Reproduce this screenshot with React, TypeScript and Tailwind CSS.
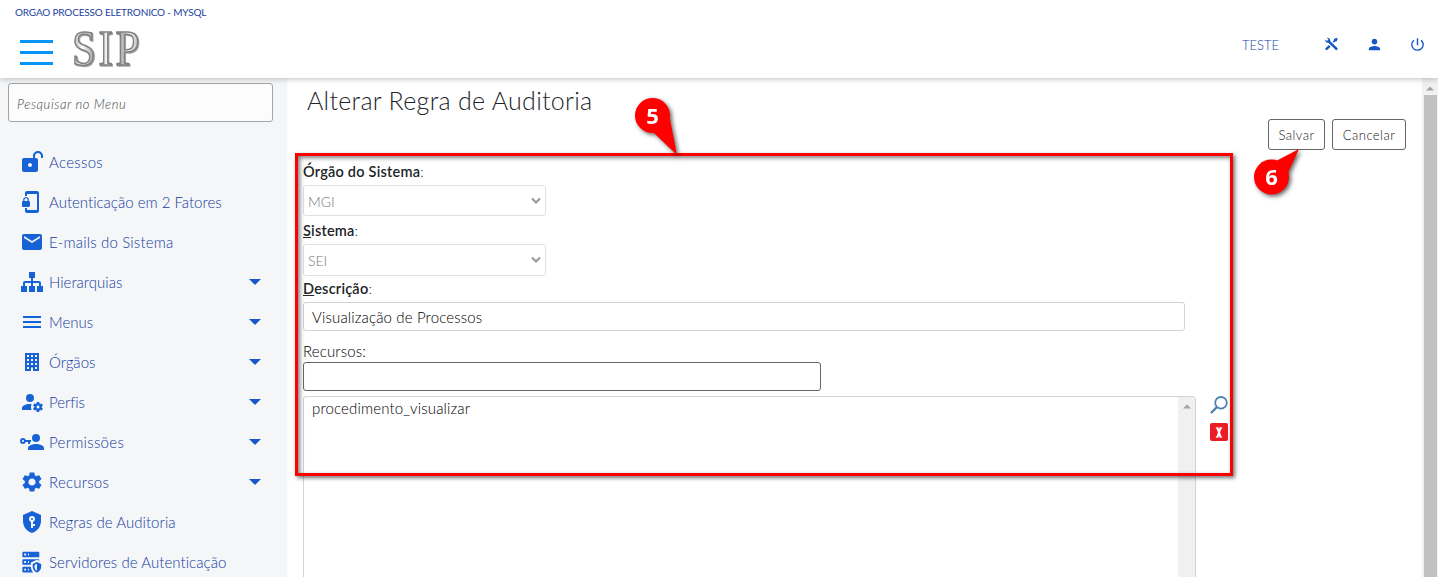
import React from "react";
import { MdEmail, MdMenu, MdSettings, MdPerson, MdPowerSettingsNew } from "react-icons/md";

const paths = {
  lock: "M18 1C15.24 1 13 3.24 13 6V8H4C2.9 8 2 8.89 2 10V20C2 21.11 2.9 22 4 22H16C17.11 22 18 21.11 18 20V10C18 8.9 17.11 8 16 8H15V6C15 4.34 16.34 3 18 3C19.66 3 21 4.34 21 6V8H23V6C23 3.24 20.76 1 18 1M10 13C11.1 13 12 13.89 12 15C12 16.11 11.11 17 10 17C8.9 17 8 16.11 8 15C8 13.9 8.9 13 10 13Z",
  phone: "M17 1H7c-1.1 0-2 .9-2 2v3h2V4h10v16H7v-2H5v3c0 1.1.9 2 2 2h10c1.1 0 2-.9 2-2V3c0-1.1-.9-2-2-2zm-8.2 10V9.5C8.8 8.1 7.4 7 6 7S3.2 8.1 3.2 9.5V11c-.6 0-1.2.6-1.2 1.2v3.5c0 .7.6 1.3 1.2 1.3h5.5c.7 0 1.3-.6 1.3-1.2v-3.5c0-.7-.6-1.3-1.2-1.3zm-1.3 0h-3V9.5c0-.8.7-1.3 1.5-1.3s1.5.5 1.5 1.3V11z",
  sitemap: "M9 2V8H11V11H5C3.89 11 3 11.89 3 13V16H1V22H7V16H5V13H11V16H9V22H15V16H13V13H19V16H17V22H23V16H21V13C21 11.89 20.11 11 19 11H13V8H15V2H9Z",
  building: "M5 3V21H11V17.5H13V21H19V3H5M7 5H9V7H7V5M11 5H13V7H11V5M15 5H17V7H15V5M7 9H9V11H7V9M11 9H13V11H11V9M15 9H17V11H15V9M7 13H9V15H7V13M11 13H13V15H11V13M15 13H17V15H15V13M7 17H9V19H7V17M15 17H17V19H15V17Z",
  profile: "M10 4A4 4 0 0 0 6 8A4 4 0 0 0 10 12A4 4 0 0 0 14 8A4 4 0 0 0 10 4M17 12C16.87 12 16.76 12.09 16.74 12.21L16.55 13.53C16.25 13.66 15.96 13.82 15.7 14L14.46 13.5C14.35 13.5 14.22 13.5 14.15 13.63L13.15 15.36C13.09 15.47 13.11 15.6 13.21 15.68L14.27 16.5C14.25 16.67 14.24 16.83 14.24 17C14.24 17.17 14.25 17.33 14.27 17.5L13.21 18.32C13.12 18.4 13.09 18.53 13.15 18.64L14.15 20.37C14.21 20.5 14.34 20.5 14.46 20.5L15.7 20C15.96 20.18 16.24 20.35 16.55 20.47L16.74 21.79C16.76 21.91 16.86 22 17 22H19C19.11 22 19.22 21.91 19.24 21.79L19.43 20.47C19.73 20.34 20 20.18 20.27 20L21.5 20.5C21.63 20.5 21.76 20.5 21.83 20.37L22.83 18.64C22.89 18.53 22.86 18.4 22.77 18.32L21.7 17.5C21.72 17.33 21.74 17.17 21.74 17C21.74 16.83 21.73 16.67 21.7 16.5L22.76 15.68C22.85 15.6 22.88 15.47 22.82 15.36L21.82 13.63C21.76 13.5 21.63 13.5 21.5 13.5L20.27 14C20 13.82 19.73 13.65 19.42 13.53L19.23 12.21C19.22 12.09 19.11 12 19 12H17M10 14C5.58 14 2 15.79 2 18V20H11.68A7 7 0 0 1 11 17A7 7 0 0 1 11.64 14.09C11.11 14.03 10.56 14 10 14M18 15.5C18.83 15.5 19.5 16.17 19.5 17C19.5 17.83 18.83 18.5 18 18.5C17.16 18.5 16.5 17.83 16.5 17C16.5 16.17 17.17 15.5 18 15.5Z",
  permission: "M11 10V12H10V14H8V12H5.83C5.42 13.17 4.31 14 3 14A3 3 0 0 1 0 11A3 3 0 0 1 3 8C4.31 8 5.42 8.83 5.83 10H11M3 10A1 1 0 0 0 2 11A1 1 0 0 0 3 12A1 1 0 0 0 4 11A1 1 0 0 0 3 10M16 14C18.67 14 24 15.34 24 18V20H8V18C8 15.34 13.33 14 16 14M16 12A4 4 0 0 1 12 8A4 4 0 0 1 16 4A4 4 0 0 1 20 8A4 4 0 0 1 16 12Z",
  shield: "M12 8A1 1 0 0 1 13 9A1 1 0 0 1 12 10A1 1 0 0 1 11 9A1 1 0 0 1 12 8M21 11C21 16.55 17.16 21.74 12 23C6.84 21.74 3 16.55 3 11V5L12 1L21 5V11M12 6A3 3 0 0 0 9 9C9 10.31 9.83 11.42 11 11.83V18H13V16H15V14H13V11.83C14.17 11.42 15 10.31 15 9A3 3 0 0 0 12 6Z",
  server: "M3 1H19A1 1 0 0 1 20 2V6A1 1 0 0 1 19 7H3A1 1 0 0 1 2 6V2A1 1 0 0 1 3 1M3 9H19A1 1 0 0 1 20 10V10.67L17.5 9.56L11 12.44V15H3A1 1 0 0 1 2 14V10A1 1 0 0 1 3 9M3 17H11C11.06 19.25 12 21.4 13.46 23H3A1 1 0 0 1 2 22V18A1 1 0 0 1 3 17M8 5H9V3H8V5M8 13H9V11H8V13M8 21H9V19H8V21M4 3V5H6V3H4M4 11V13H6V11H4M4 19V21H6V19H4M17.5 12L22 14V17C22 19.78 20.08 22.37 17.5 23C14.92 22.37 13 19.78 13 17V14L17.5 12M17.5 13.94L15 15.06V17.72C15 19.26 16.07 20.7 17.5 21.06V13.94Z",
};

function Glyph({ d, box = "0 0 24 24" }: { d: string; box?: string }) {
  return (
    <svg width="24" height="24" viewBox={box} fill="currentColor" fillRule="evenodd">
      <path d={d} />
    </svg>
  );
}

const menu: { label: string; icon: React.ReactNode; sub?: boolean; track: string }[] = [
  { label: "Acessos", icon: <Glyph d={paths.lock} />, track: "tracking-[0.3px]" },
  { label: "Autenticação em 2 Fatores", icon: <Glyph d={paths.phone} />, track: "tracking-[0.01px]" },
  { label: "E-mails do Sistema", icon: <MdEmail size={24} />, track: "tracking-[0.17px]" },
  { label: "Hierarquias", icon: <Glyph d={paths.sitemap} />, sub: true, track: "tracking-[0.02px]" },
  { label: "Menus", icon: <MdMenu size={24} />, sub: true, track: "tracking-[0px]" },
  { label: "Órgãos", icon: <Glyph d={paths.building} />, sub: true, track: "tracking-[0px]" },
  { label: "Perfis", icon: <Glyph d={paths.profile} />, sub: true, track: "tracking-[-0.05px]" },
  { label: "Permissões", icon: <Glyph d={paths.permission} />, sub: true, track: "tracking-[0.3px]" },
  { label: "Recursos", icon: <MdSettings size={24} />, sub: true, track: "tracking-[0.25px]" },
  { label: "Regras de Auditoria", icon: <Glyph d={paths.shield} />, track: "tracking-[0.06px]" },
  { label: "Servidores de Autenticação", icon: <Glyph d={paths.server} box="-0.5 -0.8 25.5 25.5" />, track: "tracking-[0.06px]" },
];

function Select({ value, className }: { value: string; className: string }) {
  return (
    <div className={"flex w-[243px] items-center justify-between rounded-[3px] border border-[#dee2e6] pr-1 pl-1 text-[14px] font-light text-[#777] " + className}>
      <span className="pt-px">{value}</span>
      <svg width="10" height="8" viewBox="0 0 10 8" fill="none" stroke="#999" strokeWidth="2.2">
        <path d="M1 1.5L5 5.5L9 1.5" />
      </svg>
    </div>
  );
}

function Callout({ n, className, tail, cx, cy }: { n: string; className: string; tail: string; cx: number; cy: number }) {
  return (
    <svg className={"absolute drop-shadow-[2px_2px_2px_rgba(0,0,0,0.6)] " + className} width="60" height="66">
      <circle cx={cx} cy={cy} r="17.5" fill="#f00" />
      <path d={tail} fill="#f00" />
      <text x={cx} y={cy + 8} textAnchor="middle" fill="#fff" fontSize="22" fontWeight="700" fontFamily="Open Sans, sans-serif">{n}</text>
    </svg>
  );
}

export default function App() {
  return (
    <div className="relative flex h-[577px] w-[1438px] flex-col overflow-hidden bg-white font-['Lato',sans-serif] text-[#212529]">
      <header className="relative z-10 flex h-[78px] shrink-0 flex-col bg-white shadow-[0_1px_6px_rgba(0,0,0,0.25)]">
        <div className="h-5 pt-[5px] pl-[15px] text-[10px] leading-[15px] tracking-[-0.18px] text-[#1c3f9f]">ORGAO PROCESSO ELETRONICO - MYSQL</div>
        <div className="flex h-[58px] items-start">
          <div className="mt-5 ml-5 flex w-[33px] flex-col gap-2">
            <div className="h-[3px] bg-[#0994f7]" />
            <div className="h-[3px] bg-[#0994f7]" />
            <div className="h-[3px] bg-[#0994f7]" />
          </div>
          <svg className="ml-4 overflow-visible drop-shadow-[1px_1px_0.5px_rgba(0,0,0,0.35)]" width="76" height="58">
            <defs>
              <linearGradient id="metal" x1="0" y1="0" x2="1" y2="0">
                <stop offset="0" stopColor="#aaa" />
                <stop offset="0.15" stopColor="#fff" />
                <stop offset="0.35" stopColor="#888" />
                <stop offset="0.5" stopColor="#fafafa" />
                <stop offset="0.68" stopColor="#999" />
                <stop offset="0.8" stopColor="#fff" />
                <stop offset="1" stopColor="#aaa" />
              </linearGradient>
            </defs>
            <text transform="scale(0.86 1)" x="3.5" y="45" letterSpacing="3" fontFamily="Liberation Serif, serif" fontSize="50" fill="url(#metal)" stroke="#808080" strokeWidth="1.6">SIP</text>
          </svg>
          <div className="flex-1" />
          <div className="mt-[17px] mr-[45px] text-[13px] leading-4 font-light text-[#123fa5]">TESTE</div>
          <div className="mt-4 flex w-[114px] gap-[27px] text-[#1758c3]">
            <svg width="15" height="16" viewBox="0 0 24 24" fill="currentColor">
              <path d="M21.71 20.29L20.29 21.71A1 1 0 0 1 18.88 21.71L7 9.85A3.81 3.81 0 0 1 6 10A4 4 0 0 1 2.22 4.7L4.76 7.24L5.29 6.71L6.71 5.29L7.24 4.76L4.7 2.22A4 4 0 0 1 10 6A3.81 3.81 0 0 1 9.85 7L21.71 18.88A1 1 0 0 1 21.71 20.29M2.29 18.88A1 1 0 0 0 2.29 20.29L3.71 21.71A1 1 0 0 0 5.12 21.71L10.59 16.25L7.76 13.42M20 2L16 4V6L13.83 8.17L15.83 10.17L18 8H20L22 4Z" />
            </svg>
            <MdPerson size={17} />
            <MdPowerSettingsNew size={17} className="-ml-px" />
          </div>
        </div>
      </header>

      <div className="flex min-h-0 flex-1">
        <aside className="w-[287px] shrink-0 bg-[#f4f6f8] pt-[5px]">
          <div className="ml-2 flex h-[39px] w-[265px] items-center rounded-[3px] border border-[#a1a5a9] bg-[#fcfcfc] pt-1 pl-2 text-[13px] font-light tracking-[0.57px] text-[#444] italic">Pesquisar no Menu</div>
          <nav className="pt-5">
            {menu.map((m) => (
              <div key={m.label} className="flex h-10 items-center pl-5">
                <span className="w-[29px] text-[#1763d6]">{m.icon}</span>
                <span className={"flex-1 text-[15px] leading-5 font-light whitespace-nowrap text-[#143c9f] " + m.track}>{m.label}</span>
                {m.sub && (
                  <svg className="mr-[26px]" width="12" height="6" viewBox="0 0 12 6" fill="#1758c3"><path d="M0 0H12L6 6Z" /></svg>
                )}
              </div>
            ))}
          </nav>
        </aside>

        <main className="min-w-0 flex-1 pl-4">
          <h1 className="h-[41px] pt-[6px] pl-1 text-[25px] leading-8 font-light tracking-[0.3px]">Alterar Regra de Auditoria</h1>
          <div className="flex h-[31px] justify-end gap-[7px] pr-4 text-[13px] font-light tracking-[0.45px] text-[#222]">
            <div className="flex w-[57px] items-center justify-center rounded-[3px] border border-[#666] pt-[2px]">Salvar</div>
            <div className="flex w-[74px] items-center justify-center rounded-[3px] border border-[#666] pt-[2px]">Cancelar</div>
          </div>
          <div className="pt-3 text-[14.5px] leading-5 font-semibold tracking-[0.22px]">Órgão do Sistema<span className="font-light">:</span></div>
          <Select value="MGI" className="mt-[3px] h-[31px]" />
          <div className="mt-[5px] text-[14.5px] leading-5 font-semibold tracking-[0.22px]"><u>S</u>istema<span className="font-light">:</span></div>
          <Select value="SEI" className="mt-[3px] h-8" />
          <div className="mt-[3px] text-[14.5px] leading-5 font-semibold tracking-[0.22px]"><u>D</u>escrição<span className="font-light">:</span></div>
          <div className="mt-[3px] flex h-[29px] w-[882px] items-center rounded-[3px] border border-[#ced4da] pt-[2px] pl-2 text-[15px] font-light tracking-[0.15px] text-black">Visualização de Processos</div>
          <div className="mt-[10px] h-[21px] text-[15px] leading-5 font-light tracking-[0.15px] text-black">Recursos:</div>
          <div className="h-[29px] w-[518px] rounded-[3px] border border-[#666]" />
          <div className="mt-[5px] flex">
            <div className="flex h-[200px] w-[893px] justify-between rounded-[3px] border border-[#ced4da]">
              <div className="pt-px pl-2 text-[15px] leading-5 font-light tracking-[0.15px] text-black">procedimento_visualizar</div>
              <div className="flex w-[17px] justify-center bg-[#f0f0f0] pt-[7px]">
                <svg width="8" height="5"><path d="M0 4.5L4 .5L8 4.5Z" fill="#a2a2a2" /></svg>
              </div>
            </div>
            <div className="ml-[14px] flex flex-col gap-[9px]">
              <svg width="18" height="18" fill="none" stroke="#4a83ae">
                <circle cx="11" cy="6.8" r="5.8" strokeWidth="1.8" />
                <path d="M7 11L1 17" strokeWidth="2.4" />
              </svg>
              <div className="flex h-[18px] w-[18px] items-center justify-center rounded-[2px] bg-[#ed1c24]">
                <svg width="8" height="11" fill="none" stroke="#fff">
                  <path d="M2.2 .5L5.8 10.5M5.8 .5L2.2 10.5" strokeWidth="2" />
                  <path d="M.8 1H3.4M4.6 1H7.2M.8 10H3.4M4.6 10H7.2" strokeWidth="1" />
                </svg>
              </div>
            </div>
          </div>
        </main>

        <div className="flex w-4 flex-col items-center bg-[#f1f1f1]">
          <div className="flex h-[17px] items-center pt-1"><svg width="8" height="5"><path d="M0 4.5L4 .5L8 4.5Z" fill="#a2a2a2" /></svg></div>
          <div className="w-[13px] flex-1 bg-[#c1c1c1]" />
        </div>
      </div>

      <div className="absolute top-[153px] left-[295px] z-20 h-[323px] w-[938px] border-3 border-[#f00] shadow-[2px_2px_4px_rgba(0,0,0,0.55),inset_2px_2px_4px_rgba(0,0,0,0.5)]" />
      <Callout n="5" className="top-[92px] left-[628px] z-20" cx={24.5} cy={23.5} tail="M26 41L49 63L41 22Z" />
      <Callout n="6" className="top-[142px] left-[1246px] z-20" cx={25.5} cy={35} tail="M31 18.5L53 7L41 33Z" />
    </div>
  );
}
